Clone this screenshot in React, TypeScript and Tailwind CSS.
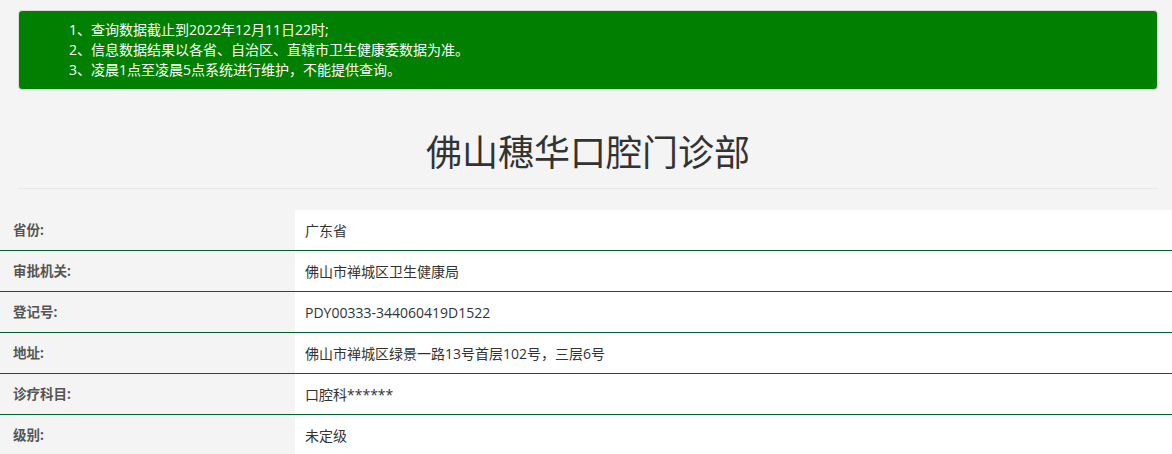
export default function App() {
  const rows = [
    ["省份:", "广东省"],
    ["审批机关:", "佛山市禅城区卫生健康局"],
    ["登记号:", "PDY00333-344060419D1522"],
    ["地址:", "佛山市禅城区绿景一路13号首层102号，三层6号"],
    ["诊疗科目:", "口腔科******"],
    ["级别:", "未定级"],
  ];
  const font = { fontFamily: '"Open Sans","Noto Sans CJK SC",sans-serif' };
  return (
    <div className="bg-[#f4f4f4] w-[1172px] h-[454px] overflow-hidden" style={font}>
      <div className="ml-[18px] pt-[10px] w-[1140px]">
        <div className="bg-[#007f00] rounded-[4px] border border-[#e0d8d8] h-[80px] pl-[50px] pt-[9px] text-white text-[14px] leading-[20px]">
          <div>1、查询数据截止到2022年12月11日22时;</div>
          <div>2、信息数据结果以各省、自治区、直辖市卫生健康委数据为准。</div>
          <div>3、凌晨1点至凌晨5点系统进行维护，不能提供查询。</div>
        </div>
        <div className="h-[99px] flex items-center justify-center text-[36px] text-[#333] border-b border-[#e8e8e8] pt-[28px]">
          佛山穗华口腔门诊部
        </div>
      </div>
      <div className="mt-[21px]">
        {rows.map(([k, v], i) => (
          <div key={i} className={`flex h-[41px] ${i < rows.length - 1 ? "border-b border-[#005f33]" : ""}`}>
            <div className="w-[295px] pl-[13px] flex items-center text-[13.5px] font-bold text-[#555]">{k}</div>
            <div className="flex-1 bg-white pl-[10px] flex items-center text-[14px] text-[#333]">{v}</div>
          </div>
        ))}
      </div>
    </div>
  );
}
